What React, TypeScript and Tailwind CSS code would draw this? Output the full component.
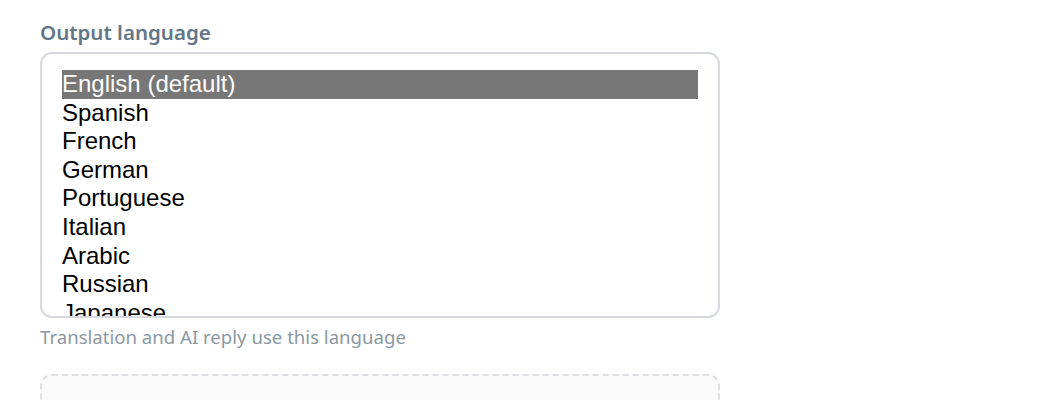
import { useState } from 'react'

const languages = [
  'English (default)',
  'Spanish',
  'French',
  'German',
  'Portuguese',
  'Italian',
  'Arabic',
  'Russian',
  'Japanese',
  'Korean',
  'Chinese (Simplified)',
  'Chinese (Traditional)',
]

export default function App() {
  const [selected, setSelected] = useState(languages[0])

  return (
    <div className="min-h-screen bg-white px-10 pt-[18px] font-['Noto_Sans',sans-serif]">
      <div className="w-[680px]">
        <label className="block text-[20.5px] font-semibold leading-[28px] text-[#627688]">
          Output language
        </label>
        <div
          role="listbox"
          className="mt-[6px] h-[266px] overflow-hidden rounded-xl border-2 border-[#d6dadf] bg-white px-5 pt-4 font-['Liberation_Sans',Arial,sans-serif] text-[24px] leading-[28.6px] text-black"
        >
          {languages.map((lang) => (
            <div
              key={lang}
              role="option"
              aria-selected={lang === selected}
              onClick={() => setSelected(lang)}
              className={
                lang === selected
                  ? 'h-[28.6px] bg-[#777777] text-white'
                  : 'h-[28.6px]'
              }
            >
              {lang}
            </div>
          ))}
        </div>
        <p className="mt-[6px] text-[18.6px] leading-[26px] text-[#8a98a2]">
          Translation and AI reply use this language
        </p>
        <div className="mt-[24px] h-[60px] rounded-xl border-2 border-dashed border-[#dde0e3] bg-[#fafafa]" />
      </div>
    </div>
  )
}
